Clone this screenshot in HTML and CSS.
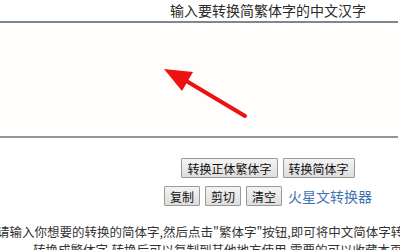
FILE: index.html
```html
<!DOCTYPE html>
<html lang="zh-CN">

<head>
    <meta charset="UTF-8">
    <meta name="viewport" content="width=device-width, initial-scale=1.0">
    <title>简繁体转换</title>
    <link rel="stylesheet" href="styles.css">
</head>

<body>
    <div class="title">输入要转换简繁体字的中文汉字</div>
    <div class="editor">
        <textarea class="input-box"></textarea>
        <svg class="arrow" width="100" height="60" viewBox="0 0 100 60">
            <line x1="22" y1="13" x2="84" y2="50" stroke="#ee1111" stroke-width="4" stroke-linecap="round" />
            <polygon points="3,3 32,6 21,25" fill="#ee1111" />
        </svg>
    </div>
    <div class="tools">
        <div class="btn-row">
            <button class="btn">转换正体繁体字</button>
            <button class="btn">转换简体字</button>
        </div>
        <div class="btn-row">
            <button class="btn">复制</button>
            <button class="btn">剪切</button>
            <button class="btn">清空</button>
            <a class="link" href="#">火星文转换器</a>
        </div>
    </div>
    <div class="intro">
        <div class="line">请输入你想要的转换的简体字,然后点击"繁体字"按钮,即可将中文简体字转</div>
        <div class="line second">转换成繁体字,转换后可以复制到其他地方使用,需要的可以收藏本页</div>
    </div>
</body>

</html>
```

FILE: styles.css
```css
body {
    margin: 0;
    padding: 0;
    font-family: "Noto Sans CJK SC", "Liberation Sans", sans-serif;
    color: #222222;
    background: #ffffff;
    overflow: hidden;
}

.title {
    height: 21px;
    line-height: 20px;
    font-size: 14px;
    text-align: right;
    padding-right: 32px;
    color: #2a2a2a;
    border-bottom: 2px solid #7b8896;
    margin-right: 2px;
}

.editor {
    position: relative;
    height: 113px;
    border-bottom: 2px solid #8a979f;
    margin-right: 2px;
}

.input-box {
    display: block;
    width: 100%;
    height: 100%;
    box-sizing: border-box;
    border: none;
    background: #fffefc;
    resize: none;
    outline: none;
}

.arrow {
    position: absolute;
    left: 161px;
    top: 43px;
}

.tools {
    padding-left: 136px;
    padding-top: 20px;
    display: flex;
    flex-direction: column;
    align-items: center;
    gap: 8px;
}

.btn-row {
    display: flex;
    align-items: center;
    gap: 5px;
}

.btn {
    font-family: inherit;
    font-size: 12px;
    line-height: 15px;
    height: 20px;
    padding: 0 5px;
    color: #111111;
    background: linear-gradient(#f4f4f4, #dddddd);
    border: 1px solid #9a9a9a;
    border-radius: 1px;
}

.link {
    font-size: 14px;
    color: #3f74b0;
    text-decoration: none;
    margin-left: 1px;
}

.intro {
    margin-top: 17px;
    font-size: 12.5px;
    line-height: 18px;
    color: #333333;
    white-space: nowrap;
}

.intro .line {
    margin-left: -3px;
}

.intro .second {
    margin-left: 33px;
}
```
